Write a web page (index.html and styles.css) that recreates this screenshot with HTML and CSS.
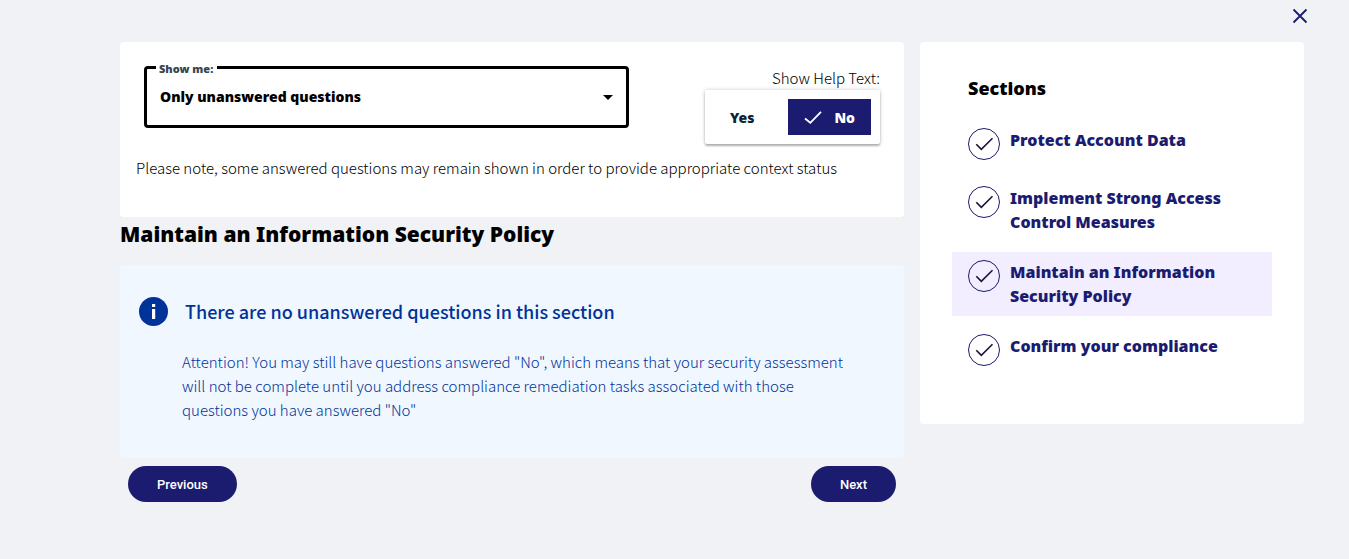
FILE: index.html
```html
<!DOCTYPE html>
<html lang="en">
<head>
  <meta charset="UTF-8">
  <meta name="viewport" content="width=device-width, initial-scale=1.0">
  <title>Maintain an Information Security Policy</title>
  <link rel="stylesheet" href="styles.css">
</head>
<body>
  <header class="top-bar">
    <button type="button" class="close-btn" aria-label="Close">
      <svg width="16" height="16" viewBox="0 0 16 16" fill="none" stroke="currentColor" stroke-width="1.8"><path d="M1.5 1.5l13 13M14.5 1.5l-13 13"/></svg>
    </button>
  </header>
  <div class="layout">
    <main>
      <section class="card filters">
        <div class="filter-row">
          <div class="select-field">
            <label for="questionFilter">Show me:</label>
            <select id="questionFilter">
              <option>All questions</option>
              <option selected>Only unanswered questions</option>
            </select>
            <svg class="arrow" width="10" height="5" viewBox="0 0 10 5" fill="currentColor"><path d="M0 0h10L5 5z"/></svg>
          </div>
          <div class="help-text">
            <span id="helpLabel">Show Help Text:</span>
            <div class="toggle" role="group" aria-labelledby="helpLabel">
              <button type="button" aria-pressed="false">Yes</button>
              <button type="button" class="selected" aria-pressed="true">
                <svg width="18" height="14" viewBox="0 0 18 14" fill="none" stroke="currentColor" stroke-width="1.8"><path d="M1 8.5l5.3 4.3L17 1.8"/></svg>
                No
              </button>
            </div>
          </div>
        </div>
        <p class="note">Please note, some answered questions may remain shown in order to provide appropriate context status</p>
      </section>
      <h1>Maintain an Information Security Policy</h1>
      <section class="info">
        <div class="info-title">
          <svg width="29" height="29" viewBox="0 0 29 29"><circle cx="14.5" cy="14.5" r="14.5" fill="#003399"/><path d="M13 7h3.2v3H13zM13 12h3.2v10H13z" fill="#fff"/></svg>
          <h2>There are no unanswered questions in this section</h2>
        </div>
        <p>Attention! You may still have questions answered "No", which means that your security assessment will not be complete until you address compliance remediation tasks associated with those questions you have answered "No"</p>
      </section>
      <div class="pager">
        <button type="button">Previous</button>
        <button type="button">Next</button>
      </div>
    </main>
    <aside class="card sections">
      <h2>Sections</h2>
      <nav>
        <a href="#protect">
          <svg width="32" height="32" viewBox="0 0 32 32" fill="none" stroke="#1b1b6f"><circle cx="16" cy="16" r="15.5"/><path d="M8.3 16.2l5 5.2L24.5 10.3" stroke="#1c1238" stroke-width="1.6"/></svg>
          <span>Protect Account Data</span>
        </a>
        <a href="#access">
          <svg width="32" height="32" viewBox="0 0 32 32" fill="none" stroke="#1b1b6f"><circle cx="16" cy="16" r="15.5"/><path d="M8.3 16.2l5 5.2L24.5 10.3" stroke="#1c1238" stroke-width="1.6"/></svg>
          <span>Implement Strong Access Control Measures</span>
        </a>
        <a href="#policy" class="active">
          <svg width="32" height="32" viewBox="0 0 32 32" fill="none" stroke="#1b1b6f"><circle cx="16" cy="16" r="15.5"/><path d="M8.3 16.2l5 5.2L24.5 10.3" stroke="#1c1238" stroke-width="1.6"/></svg>
          <span>Maintain an Information Security Policy</span>
        </a>
        <a href="#confirm">
          <svg width="32" height="32" viewBox="0 0 32 32" fill="none" stroke="#1b1b6f"><circle cx="16" cy="16" r="15.5"/><path d="M8.3 16.2l5 5.2L24.5 10.3" stroke="#1c1238" stroke-width="1.6"/></svg>
          <span>Confirm your compliance</span>
        </a>
      </nav>
    </aside>
  </div>
</body>
</html>
```
FILE: styles.css
```css
* {
  box-sizing: border-box;
}
body {
  margin: 0;
  background-color: #f1f2f6;
  color: #000;
  font-family: "Noto Sans CJK SC", sans-serif;
  font-size: 15px;
  font-weight: 300;
  line-height: 24px;
}
h1, h2, p {
  margin: 0;
}
button {
  border: none;
  cursor: pointer;
}
h1, .select-field, .toggle button, .sections {
  font-family: "Noto Sans", sans-serif;
  font-weight: 900;
}
.top-bar {
  display: flex;
  justify-content: flex-end;
  padding: 4px 37px 14px;
}
.close-btn {
  display: flex;
  padding: 4px;
  background: none;
  color: #1b1b6f;
}
.layout {
  display: grid;
  grid-template-columns: repeat(12, 1fr);
  gap: 16px;
  align-items: start;
  padding: 0 45px 0 120px;
}
main {
  grid-column: span 8;
}
.card {
  background: #fff;
  border-radius: 4px;
}
.filters {
  padding: 24px 24px 37px 16px;
}
.filter-row {
  display: flex;
  justify-content: space-between;
  align-items: flex-start;
  padding-left: 8px;
}
.select-field {
  position: relative;
  flex: 0 1 485px;
  border: 3px solid #000;
  border-radius: 4px;
  font-size: 14px;
}
.select-field label {
  position: absolute;
  top: -8px;
  left: 9px;
  padding: 0 4px 0 3px;
  background: #fff;
  color: #37474f;
  font-size: 11px;
  line-height: 16px;
}
.select-field select {
  display: block;
  width: 100%;
  height: 56px;
  padding: 0 32px 0 13px;
  border: none;
  background: none;
  appearance: none;
  color: #000;
  font: inherit;
}
.arrow {
  position: absolute;
  top: 26px;
  right: 13px;
  pointer-events: none;
}
.help-text {
  display: flex;
  flex-direction: column;
  align-items: flex-end;
}
.toggle {
  display: flex;
  gap: 18px;
  padding: 9px;
  border-radius: 2px;
  box-shadow: 0 2px 2px rgba(0, 0, 0, 0.25), 0 0 4px rgba(0, 0, 0, 0.2);
}
.toggle button {
  display: flex;
  align-items: center;
  gap: 12px;
  height: 36px;
  padding: 0 16px;
  background: #fff;
  color: #0b2536;
  font-size: 14px;
}
.toggle .selected {
  background: #1b1b6f;
  color: #fff;
}
.note {
  padding-top: 12px;
}
h1 {
  padding: 1px 0 15px;
  font-size: 21px;
  line-height: 32px;
}
.info {
  padding: 30px 50px 36px 19px;
  background: #f0f7ff;
  border-radius: 4px;
  color: #003399;
}
.info-title {
  display: flex;
  align-items: center;
  gap: 17px;
}
.info h2 {
  font-size: 18px;
  font-weight: 500;
  line-height: 32px;
}
.info p {
  padding: 23px 0 0 43px;
}
.pager {
  display: flex;
  justify-content: space-between;
  padding: 8px;
}
.pager button {
  height: 36px;
  padding: 0 29px;
  border-radius: 18px;
  background: #1b1b6f;
  color: #fff;
  font: 500 13px Roboto, sans-serif;
}
.sections {
  grid-column: span 4;
  padding: 34px 32px 50px;
  font-size: 16px;
}
.sections h2 {
  padding: 0 16px 20px;
  font-size: 18px;
  font-weight: 900;
}
.sections nav {
  display: flex;
  flex-direction: column;
  gap: 10px;
}
.sections a {
  display: flex;
  align-items: flex-start;
  gap: 10px;
  padding: 8px 16px;
  color: #1b1b6f;
  text-decoration: none;
}
.sections a svg {
  flex: none;
}
.sections .active {
  background: #f2edff;
}
```
